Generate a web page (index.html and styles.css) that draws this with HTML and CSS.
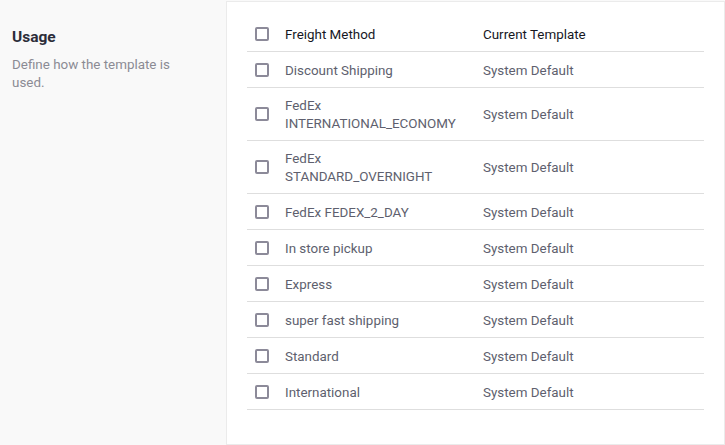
FILE: index.html
```html
<!DOCTYPE html>
<html>
<head>
<meta charset="utf-8">
<link rel="stylesheet" href="styles.css">
</head>
<body>
<div class="page">
  <aside class="intro">
    <h2 class="title">Usage</h2>
    <p class="desc">Define how the template is used.</p>
  </aside>
  <section class="card">
    <div class="table">
      <div class="row head">
        <span class="cb"></span><span class="c1">Freight Method</span><span class="c2">Current Template</span>
      </div>
      <div class="row"><span class="cb"></span><span class="c1">Discount Shipping</span><span class="c2">System Default</span></div>
      <div class="row"><span class="cb"></span><span class="c1">FedEx<br>INTERNATIONAL_ECONOMY</span><span class="c2">System Default</span></div>
      <div class="row"><span class="cb"></span><span class="c1">FedEx<br>STANDARD_OVERNIGHT</span><span class="c2">System Default</span></div>
      <div class="row"><span class="cb"></span><span class="c1">FedEx FEDEX_2_DAY</span><span class="c2">System Default</span></div>
      <div class="row"><span class="cb"></span><span class="c1">In store pickup</span><span class="c2">System Default</span></div>
      <div class="row"><span class="cb"></span><span class="c1">Express</span><span class="c2">System Default</span></div>
      <div class="row"><span class="cb"></span><span class="c1">super fast shipping</span><span class="c2">System Default</span></div>
      <div class="row"><span class="cb"></span><span class="c1">Standard</span><span class="c2">System Default</span></div>
      <div class="row"><span class="cb"></span><span class="c1">International</span><span class="c2">System Default</span></div>
    </div>
  </section>
</div>
</body>
</html>
```

FILE: styles.css
```css
* { box-sizing: border-box; }
html, body { margin: 0; padding: 0; }
body {
  background: #f9f9f9;
  font-family: Roboto, "Noto Sans", sans-serif;
  font-size: 13.4px;
  color: #5e5f6e;
  width: 725px;
  height: 445px;
  overflow: hidden;
}
.page {
  display: flex;
  align-items: flex-start;
  padding-top: 1px;
}
.intro {
  width: 226px;
  flex: none;
  padding: 27px 40px 0 12px;
}
.title {
  margin: 0;
  font-size: 15.5px;
  font-weight: 700;
  line-height: 18px;
  color: #2c2d3a;
}
.desc {
  margin: 10px 0 0;
  font-size: 13.4px;
  line-height: 18px;
  color: #8b8b94;
}
.card {
  flex: none;
  width: 499px;
  height: 444px;
  background: #fff;
  border: 1px solid #ebebeb;
  padding: 14px 20px 0 20px;
}
.row {
  display: grid;
  grid-template-columns: 38px 198px 1fr;
  align-items: center;
  min-height: 36px;
  padding: 8px 0;
  line-height: 18px;
  border-bottom: 1px solid #dedede;
}
.c1, .c2 { position: relative; top: 1px; }
.row.head { color: #16171f; }
.cb {
  display: block;
  width: 14px;
  height: 14px;
  margin-left: 8px;
  border: 2px solid #8c8a99;
  border-radius: 2px;
}
```
